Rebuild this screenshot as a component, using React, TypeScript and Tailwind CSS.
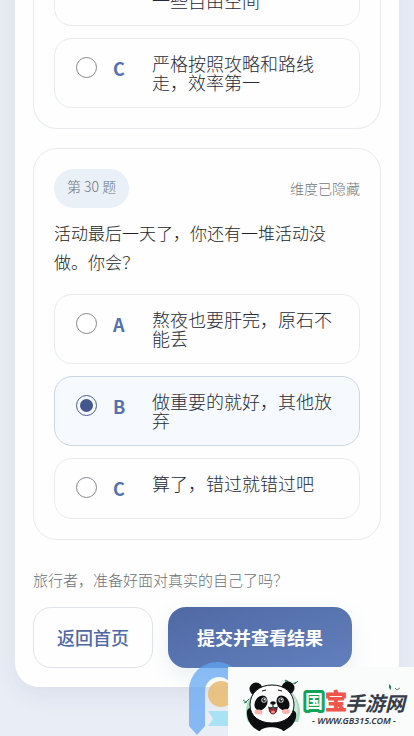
import { useState } from "react";
import { clsx } from "clsx";

type Option = { key: string; text: string };

const PREVIOUS: Option[] = [
  { key: "B", text: "\n一些自由空间" },
  { key: "C", text: "严格按照攻略和路线走，效率第一" },
];

const CURRENT: Option[] = [
  { key: "A", text: "熬夜也要肝完，原石不能丢" },
  { key: "B", text: "做重要的就好，其他放弃" },
  { key: "C", text: "算了，错过就错过吧" },
];

const OptionList = ({
  name,
  options,
  initial,
}: {
  name: string;
  options: Option[];
  initial?: string;
}) => {
  const [value, setValue] = useState(initial);

  return (
    <div className="flex flex-col gap-3">
      {options.map((option) => {
        const active = option.key === value;
        return (
          <label
            key={option.key}
            className={clsx(
              "flex items-start rounded-[18px] border px-[21px] py-[15px]",
              active ? "border-[#cbd6e4] bg-[#f6faff]" : "border-[#e9ebee] bg-[#fefefe]"
            )}
          >
            <input
              type="radio"
              name={name}
              checked={active}
              onChange={() => setValue(option.key)}
              className={clsx(
                "mt-[3px] size-[21px] shrink-0 appearance-none rounded-full border p-[3px]",
                active
                  ? "border-[#4a5b8c] bg-[#43578c] bg-clip-content"
                  : "border-[#85878b] bg-white"
              )}
            />
            <span className="ml-4 w-[23px] shrink-0 text-[18px] leading-[29px] font-bold text-[#5571ad]">
              {option.key}
            </span>
            <span className="ml-4 flex-1 text-[18px] leading-[19px] font-light whitespace-pre-line text-[#262a38]">
              {option.text}
            </span>
          </label>
        );
      })}
    </div>
  );
};

const Panda = () => (
  <svg viewBox="0 0 66 66" className="size-[66px] shrink-0" aria-hidden="true">
    <path d="M8 52a27 27 0 1 1 50 0z" fill="#a5dcc0" />
    <path d="M12 50a24 24 0 1 1 43 0z" fill="#c8ebd9" />
    {/* leaves */}
    <path d="M3 30l3 2 3-3M4 33l3-1" stroke="#2c7d58" fill="none" />
    <path d="M45 10l3 1 1 4-3-2zM53 13l2 1 3-3" stroke="#2c7d58" fill="#2c9c66" strokeWidth=".7" />
    {/* ears */}
    <circle cx="16" cy="19" r="6.5" fill="#0d0e10" />
    <circle cx="48" cy="18" r="6.5" fill="#0d0e10" />
    {/* body and paws */}
    <path
      d="M7 41c1-4 6-4 7 0l4 8h28l2-7c1-4 6-3 8 1 1 5-2 11-6 14l-6 4H19C12 58 6 50 7 41z"
      fill="#0d0e10"
    />
    <path d="M20 61c3-5 19-5 23 0z" fill="#fff" />
    {/* head */}
    <path
      d="M32 15c13 0 22 8 22 20 0 11-9 18-22 18s-22-7-22-18c0-12 9-20 22-20z"
      fill="#fff"
      stroke="#0d0e10"
    />
    <ellipse cx="21" cy="33" rx="6" ry="8" transform="rotate(30 21 33)" fill="#0d0e10" />
    <ellipse cx="43" cy="33" rx="6" ry="8" transform="rotate(-30 43 33)" fill="#0d0e10" />
    <circle cx="24" cy="30" r="2.6" fill="#fff" />
    <circle cx="24" cy="30" r="1.9" fill="#26282c" />
    <circle cx="24.5" cy="29.4" r=".8" fill="#fff" />
    <circle cx="41" cy="30" r="2.6" fill="#fff" />
    <circle cx="41" cy="30" r="1.9" fill="#26282c" />
    <circle cx="41.5" cy="29.4" r=".8" fill="#fff" />
    <path d="M22 21l4-1M38 20l4 1" stroke="#0d0e10" />
    <ellipse cx="33" cy="33" rx="2.8" ry="1.8" fill="#0d0e10" />
    <path d="M33 34v3M28 37c2 1 4 1 5 0 1 1 3 1 5 0" stroke="#0d0e10" fill="none" />
    <path d="M29 38c2 1 6 1 8 0 0 4-2 6-4 6s-4-2-4-6z" fill="#b3242b" stroke="#0d0e10" strokeWidth=".8" />
    <ellipse cx="33" cy="42" rx="2" ry="1.5" fill="#f58a86" />
    <ellipse cx="18.5" cy="42" rx="4" ry="2.5" fill="#f9b5ad" />
    <ellipse cx="46" cy="41.5" rx="4" ry="2.5" fill="#f9b5ad" />
  </svg>
);

const SiteName = () => (
  <svg
    viewBox="0 0 108 66"
    className="h-[66px] w-[108px] shrink-0 overflow-visible"
    role="img"
    aria-label="国宝手游网"
  >
    <g fontFamily="'Noto Sans CJK SC', sans-serif" strokeLinejoin="round">
      <text
        x="-1"
        y="38"
        fontSize="18"
        fontWeight="700"
        fill="#fff"
        stroke="#12a35a"
        strokeWidth="6"
        paintOrder="stroke"
      >
        国
      </text>
      <text x="19" y="39" fontSize="22" fontWeight="700" fill="#f0554c" stroke="#f0554c" strokeWidth="1">
        宝
      </text>
      <text x="39" y="41" fontSize="20" fontWeight="700" fontStyle="italic" fill="#363c48">
        手游网
      </text>
    </g>
    <path d="M83 14l2 2v4l-2-2z" fill="#1c8a55" />
    <path d="M89 18l2 2 3-2" stroke="#6b8378" fill="none" />
    <text
      x="48"
      y="54"
      textAnchor="middle"
      fontFamily="'Noto Sans', sans-serif"
      fontSize="9"
      fontWeight="600"
      fontStyle="italic"
      fill="#303640"
    >
      - WWW.GB315.COM -
    </text>
  </svg>
);

export default function App() {
  return (
    <div className="relative flex h-screen flex-col justify-end overflow-hidden bg-[#e9edf6] pb-[49px] font-['Noto_Sans_CJK_SC',sans-serif]">
      <main className="mx-[15px] rounded-b-3xl bg-[#fefefe] px-[18px] pb-[19px] shadow-[0_8px_24px_rgba(60,60,90,0.07)]">
        <section className="rounded-b-3xl border border-t-0 border-[#e8eaed] px-5 pb-5">
          <OptionList name="q29" options={PREVIOUS} />
        </section>

        <section className="mt-[19px] rounded-3xl border border-[#e8eaed] p-5">
          <div className="flex items-center justify-between">
            <span className="h-[39px] rounded-full bg-[#eaf0f8] px-[13px] text-[14px] leading-[34px] font-light text-[#6d737d]">
              第 30 题
            </span>
            <span className="text-[14px] font-light text-[#74777d]">维度已隐藏</span>
          </div>
          <h2 className="mt-[10px] mb-[18px] pr-4 text-[17px] leading-[29px] font-light text-[#1c1f26]">
            活动最后一天了，你还有一堆活动没做。你会？
          </h2>
          <OptionList name="q30" options={CURRENT} initial="B" />
        </section>

        <p className="mt-7 mb-4 text-[15px] leading-[23px] font-light text-[#6c7077]">
          旅行者，准备好面对真实的自己了吗？
        </p>
        <div className="flex gap-[15px]">
          <button className="h-[61px] rounded-[18px] border border-[#e0e3ea] px-[23px] text-[18px] font-medium text-[#5069a5]">
            返回首页
          </button>
          <button className="h-[61px] rounded-[18px] bg-linear-to-br from-[#5069a5] to-[#6180bd] px-[29px] text-[18px] font-bold text-white shadow-[0_8px_20px_rgba(80,130,160,0.12)]">
            提交并查看结果
          </button>
        </div>
      </main>

      {/* floating badge and site banner */}
      <svg
        viewBox="0 0 56 74"
        className="absolute right-[169px] bottom-0 h-[74px] w-[56px]"
        aria-hidden="true"
      >
        <path
          d="M0 28a28 28 0 0 1 56 0v8H44v-8a13 13 0 0 0-28 2v34l-8 9-8-9z"
          fill="#60a5f2"
          fillOpacity=".72"
        />
        <circle cx="32" cy="32" r="13" fill="#e9be78" fillOpacity=".9" />
        <path d="M19 49h37v15H19l5-7z" fill="#98dff5" fillOpacity=".8" />
      </svg>
      <div className="absolute right-0 bottom-0 flex h-[69px] w-[186px] items-end bg-[#fafbfb] pl-3">
        <Panda />
        <SiteName />
      </div>
    </div>
  );
}
